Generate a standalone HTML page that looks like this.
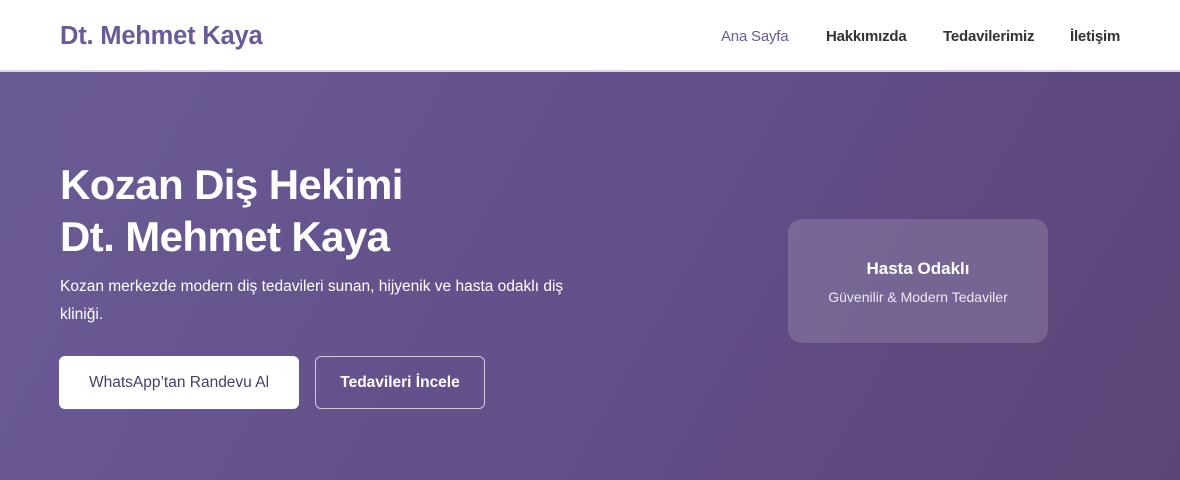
<!DOCTYPE html>
<html><head><meta charset="utf-8"><style>
*{margin:0;padding:0;box-sizing:border-box}
body{width:1180px;height:480px;overflow:hidden;font-family:"Liberation Sans",sans-serif;background:#5f4d82}
header{height:72px;background:#fff;border-bottom:2px solid #d9d3e6;position:relative}
.logo{position:absolute;left:60px;top:22px;font-size:25.5px;font-weight:bold;color:#6a5a96;letter-spacing:-0.2px}
nav a{position:absolute;top:28px;font-size:15px;color:#333;text-decoration:none;font-weight:bold;letter-spacing:-0.2px}
.hero{position:absolute;top:72px;left:0;width:1180px;height:408px;background:linear-gradient(120deg,#6b5b95 0%,#634f8a 50%,#5a4676 100%)}
h1{position:absolute;left:60px;top:87px;font-size:42px;line-height:52px;color:#fff;font-weight:bold;letter-spacing:-0.6px}
p{position:absolute;left:60px;top:201px;width:540px;font-size:15.5px;line-height:28px;color:#fff}
.b1{position:absolute;left:59px;top:284px;width:240px;height:53px;background:#fff;border-radius:6px;color:#4a3d6a;font-size:15.5px;display:flex;align-items:center;justify-content:center}
.b2{position:absolute;left:315px;top:284px;width:170px;height:53px;border:1px solid rgba(255,255,255,.7);border-radius:6px;color:#fff;font-size:15.5px;font-weight:bold;display:flex;align-items:center;justify-content:center}
.card{position:absolute;left:788px;top:147px;width:260px;height:124px;background:rgba(255,255,255,.15);border-radius:14px;color:#fff;text-align:center}
.card b{display:block;margin-top:40px;font-size:17px}
.card span{display:block;margin-top:10px;font-size:14px;color:#ece8f3}
</style></head><body>
<header><div class="logo">Dt. Mehmet Kaya</div>
<nav><a style="left:721px;color:#6a5a96;font-weight:normal">Ana Sayfa</a><a style="left:826px">Hakkımızda</a><a style="left:943px">Tedavilerimiz</a><a style="left:1070px">İletişim</a></nav></header>
<div class="hero">
<h1>Kozan Diş Hekimi<br>Dt. Mehmet Kaya</h1>
<p>Kozan merkezde modern diş tedavileri sunan, hijyenik ve hasta odaklı diş kliniği.</p>
<div class="b1">WhatsApp’tan Randevu Al</div>
<div class="b2">Tedavileri İncele</div>
<div class="card"><b>Hasta Odaklı</b><span>Güvenilir &amp; Modern Tedaviler</span></div>
</div>
</body></html>
